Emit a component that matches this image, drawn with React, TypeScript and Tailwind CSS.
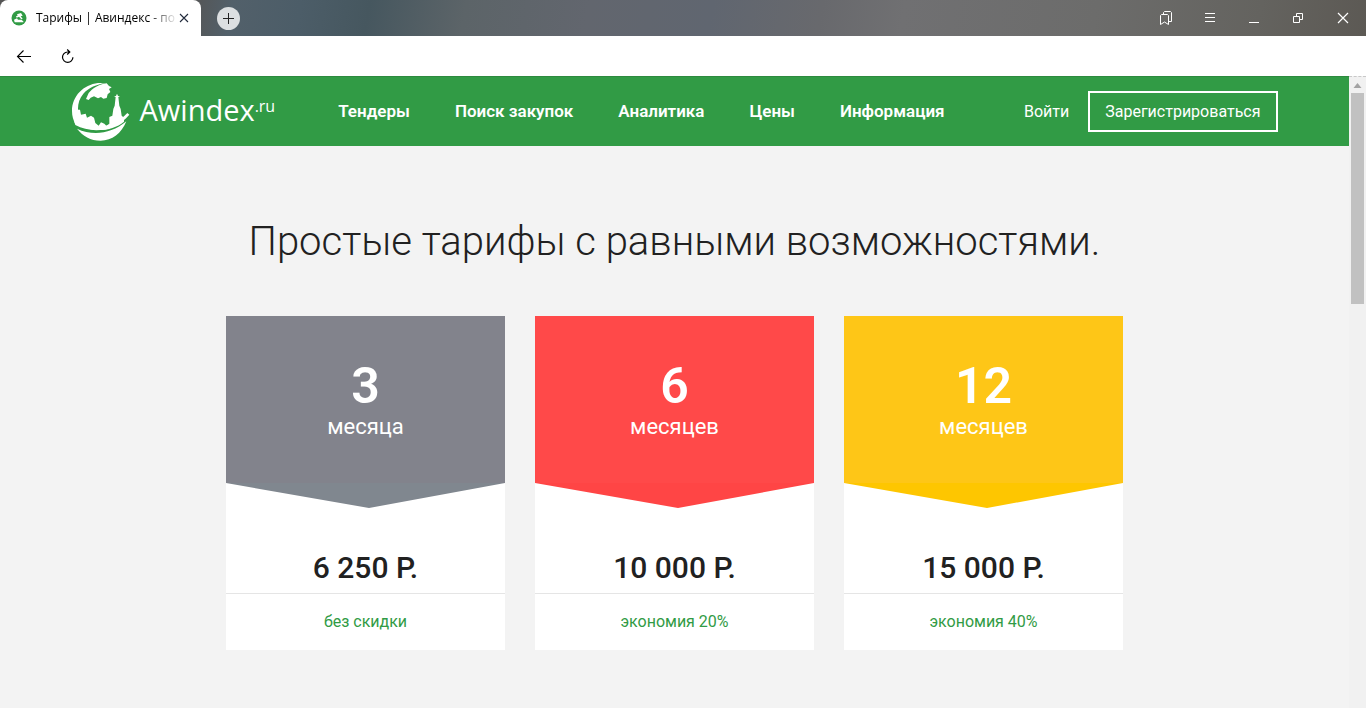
import type { ReactNode } from "react";

type Plan = {
  count: string;
  unit: string;
  price: string;
  note: string;
  head: string;
  tip: string;
};

const plans: Plan[] = [
  { count: "3", unit: "месяца", price: "6 250 Р.", note: "без скидки", head: "bg-[#82838c]", tip: "text-[#80878f]" },
  { count: "6", unit: "месяцев", price: "10 000 Р.", note: "экономия 20%", head: "bg-[#ff4949]", tip: "text-[#ff4545]" },
  { count: "12", unit: "месяцев", price: "15 000 Р.", note: "экономия 40%", head: "bg-[#fec617]", tip: "text-[#fec600]" },
];

const links = ["Тендеры", "Поиск закупок", "Аналитика", "Цены", "Информация"];

function WindowButton({ label, children }: { label: string; children: ReactNode }) {
  return (
    <button type="button" aria-label={label} className="flex h-9 w-11 items-center justify-center text-white">
      <svg viewBox="0 0 16 16" className="size-4" fill="none" stroke="currentColor" strokeWidth="1">
        {children}
      </svg>
    </button>
  );
}

function TabBar() {
  return (
    <div className="flex h-9 bg-[linear-gradient(100deg,#555_0%,#555_14%,#52606a_17%,#4c5d68_22%,#46575f_27%,#5c6468_34%,#62666e_43%,#606670_52%,#68696d_60%,#707072_66%,#6c6c6b_80%,#64635f_92%,#5c5954_100%)]">
      <div className="flex w-[201px] items-center rounded-t-lg bg-white pl-[11px] pr-2">
        <svg viewBox="0 0 48 48" className="size-4 shrink-0">
          <circle cx="24" cy="24" r="22.500" fill="#319b45" />
          <path d="M18 13 30 9l5 8-6 2 6 7-4 2-7-8-7 3-2-4 5-2zM9 29l9-4 3 4h10l6 5v3H11z" fill="#fff" />
        </svg>
        <span className="ml-[9px] w-[140px] shrink-0 whitespace-nowrap font-['Open_Sans',sans-serif] text-xs text-black [mask-image:linear-gradient(90deg,#000_112px,transparent_142px)]">
          Тарифы | Авиндекс - по
        </span>
        <button type="button" aria-label="Закрыть вкладку" className="flex size-4 shrink-0 items-center justify-center text-[#222b3c]">
          <svg viewBox="0 0 10 10" className="size-[10px]" stroke="currentColor" strokeWidth="1.1">
            <path d="m1 1 8 8M9 1 1 9" />
          </svg>
        </button>
      </div>
      <div className="flex flex-1 items-center pl-4">
        <button type="button" aria-label="Новая вкладка" className="flex size-[23px] items-center justify-center rounded-full bg-[#dcdfe1] text-[#222]">
          <svg viewBox="0 0 11 11" className="size-[11px]" stroke="currentColor" strokeWidth="1">
            <path d="M0 5.500h11M5.500 0v11" />
          </svg>
        </button>
      </div>
      <div className="flex pr-0.5">
        <WindowButton label="Закладки">
          <path d="M3.500 4.500h6l1 1v9L6.500 12l-4 2.500v-9zM5.500 4.500v-2l1-1h6l1 1v9h-3" />
        </WindowButton>
        <WindowButton label="Меню">
          <path d="M3 3.500h10M3 7.500h10M3 11.500h10" />
        </WindowButton>
        <WindowButton label="Свернуть">
          <path d="M3 12.500h10" />
        </WindowButton>
        <WindowButton label="Восстановить">
          <path d="M3.500 6.500h6v6h-6zM6.500 6v-2.500h6v6h-3" />
        </WindowButton>
        <WindowButton label="Закрыть">
          <path d="m4 3 10 10M14 3 4 13" strokeWidth="1.200" />
        </WindowButton>
      </div>
    </div>
  );
}

function Toolbar() {
  return (
    <div className="flex h-10 items-center gap-7 bg-white pl-4 text-black">
      <button type="button" aria-label="Назад" className="flex size-4 items-center justify-center">
        <svg viewBox="0 0 16 16" className="size-4" fill="none" stroke="currentColor" strokeWidth="1.1">
          <path d="M15 8.500H1.500M7.500 2.500l-6 6 6 6" />
        </svg>
      </button>
      <button type="button" aria-label="Обновить" className="flex size-4 items-center justify-center">
        <svg viewBox="0 0 16 16" className="size-4" fill="none" stroke="currentColor" strokeWidth="1.200">
          <path d="M7.200 1.500 9.800 4 7.200 6.500M9.500 4H7.500a5.200 5.200 0 1 0 5.400 5.200" />
        </svg>
      </button>
    </div>
  );
}

function Logo() {
  return (
    <a href="#home" aria-label="Awindex.ru" className="flex items-center text-white">
      <svg viewBox="12 14 174 174" className="size-[58px]" fill="#fff">
        <path d="M112 14C60 8 12 45 12 98c0 16 4 28 10 38l22-2C26 110 24 72 46 46c16-18 40-28 66-32z" />
        <path d="m54 62 8-18c12-14 30-26 54-29l7 8 8 4-8 5 4 9-8 7-3 11-10 2-7-5-9 4-12-6-10 4-6 7z" />
        <path d="M26 94h10l3 15 14-3 4 12 12-6 9 6 4 16 10 8 7-10 10 4 6 6 9-6v-20l9-4 3-20 4-10 3-26-5-3h6l3-7 3 7h6l-5 3 3 26 4 10 3 20 7 6v12c-36 30-97 34-140 8z" />
        <path d="M18 128c48 30 112 26 160-24l6 5C140 162 70 166 22 140z" />
        <path d="M27 151c46 22 102 17 148-22-14 36-43 58-77 58-30 0-54-14-71-36z" />
      </svg>
      <span className="ml-[10px] pb-1 font-['Open_Sans',sans-serif] text-[29px] leading-[38px]">Awindex</span>
      <span className="pb-3 font-['Open_Sans',sans-serif] text-base leading-5">.ru</span>
    </a>
  );
}

function SiteHeader() {
  return (
    <header className="border-t border-[#2d8a3e] bg-[#319b45] text-[17px] text-white">
      <div className="mx-auto flex h-[69px] max-w-[1206px] items-center">
        <Logo />
        <nav className="ml-[63px] flex gap-[45px] font-semibold">
          {links.map((link) => (
            <a key={link} href="#section" className="whitespace-nowrap">
              {link}
            </a>
          ))}
        </nav>
        <div className="ml-auto flex items-center gap-[19px] text-base">
          <a href="#login">Войти</a>
          <a href="#register" className="border-2 border-white px-[15px] py-1 leading-[29px]">
            Зарегистрироваться
          </a>
        </div>
      </div>
    </header>
  );
}

function PlanCard({ plan }: { plan: Plan }) {
  return (
    <article className="flex-1 bg-white text-center">
      <div className={`flex h-[167px] flex-col items-center pt-10 text-white ${plan.head}`}>
        <strong className="text-[50px] font-semibold leading-[60px]">{plan.count}</strong>
        <span className="text-[22px] leading-[22px]">{plan.unit}</span>
      </div>
      <svg viewBox="0 0 279 25" preserveAspectRatio="none" className={`h-[25px] w-full ${plan.tip}`} fill="currentColor">
        <path d="M0 0h279L143 25z" />
      </svg>
      <p className="border-b border-[#e5e5e5] pb-[7px] pt-[41px] text-[30px] font-medium leading-[37px] text-[#212121]">{plan.price}</p>
      <p className="py-4 text-base text-[#319b45]">{plan.note}</p>
    </article>
  );
}

export default function App() {
  return (
    <div className="flex min-h-screen flex-col bg-[#f3f3f3] font-[Roboto,sans-serif]">
      <TabBar />
      <Toolbar />
      <div className="flex flex-1">
        <div className="min-w-0 flex-1">
          <SiteHeader />
          <main className="mx-auto max-w-[897px] pt-[71px]">
            <h1 className="whitespace-nowrap text-center text-[40px] font-light leading-[50px] text-[#212121]">
              Простые тарифы с равными возможностями.
            </h1>
            <div className="mt-[49px] flex gap-[30px]">
              {plans.map((plan) => (
                <PlanCard key={plan.count} plan={plan} />
              ))}
            </div>
          </main>
        </div>
        <div className="flex w-[17px] flex-col items-center border-t border-dashed border-[#c8c8c8] bg-[#f1f1f1]">
          <svg viewBox="0 0 17 16" className="h-4 w-[17px] shrink-0" fill="#a3a3a3">
            <path d="M4.500 11h8l-4-5z" />
          </svg>
          <div className="h-[211px] w-[13px] bg-[#c1c1c1]" />
        </div>
      </div>
    </div>
  );
}
